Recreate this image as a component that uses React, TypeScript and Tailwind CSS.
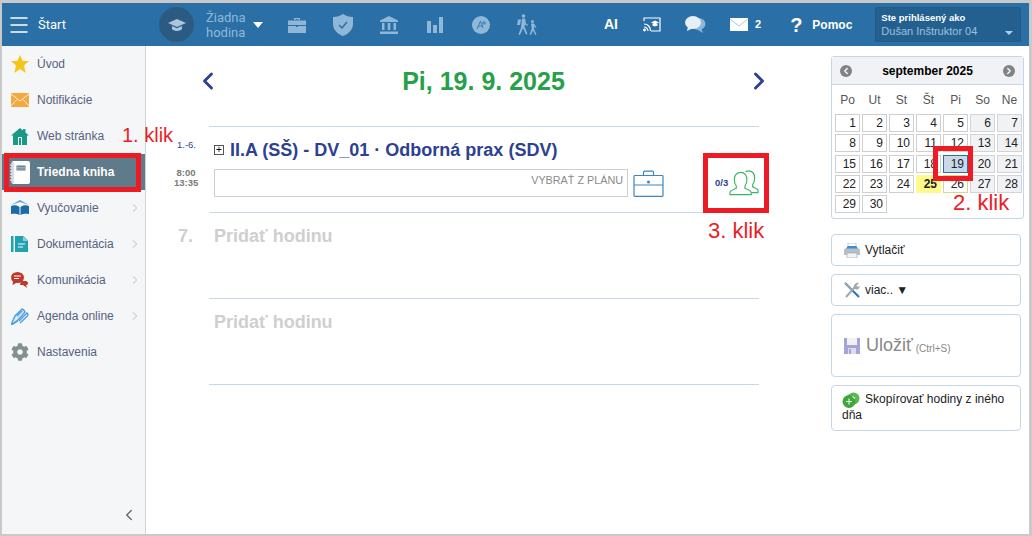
import React from "react";
import { ChevronLeft, ChevronRight, Menu } from "lucide-react";
import { FaCog } from "react-icons/fa";

// Small drawn icons
const Cap = () => (
  <svg width="18" height="14" viewBox="0 0 18 14" fill="#a9c6dd">
    <path d="M9 1 18 5 9 9 0 5z" />
    <path d="M4 8v3c2 2.500 8 2.500 10 0V8l-5 2.300z" />
  </svg>
);
const Briefcase = ({ c = "#8fb8d8" }: { c?: string }) => (
  <svg width="18" height="16" viewBox="0 0 18 16" fill={c}>
    <path d="M6 3V1h6v2h-1.300V2.200H7.300V3z" />
    <path d="M0 3.500h18V8H0zM0 9h8v1h2V9h8v7H0z" />
  </svg>
);
const Shield = () => (
  <svg width="20" height="22" viewBox="0 0 20 22">
    <path d="M10 0c3 2 6 3 10 3v7c0 6-5 10-10 12C5 20 0 16 0 10V3c4 0 7-1 10-3z" fill="#8fb8d8" />
    <path d="m6 11 3 3 5-6" stroke="#2a6fa5" strokeWidth="1.500" fill="none" />
  </svg>
);
const Bank = () => (
  <svg width="18" height="18" viewBox="0 0 18 18" fill="#8fb8d8">
    <path d="M9 0 18 4.500V6H0V4.500z" />
    <path d="M2 7h2.500v7H2zM7.700 7h2.600v7H7.700zM13.500 7H16v7h-2.500zM0 15.500h18V18H0z" />
  </svg>
);
const Bars = () => (
  <svg width="16" height="16" viewBox="0 0 16 16" fill="#8fb8d8">
    <path d="M0 4h4v12H0zM6 8h4v8H6zM12 0h4v16h-4z" />
  </svg>
);
const Plus = () => (
  <svg width="18" height="18" viewBox="0 0 18 18">
    <circle cx="9" cy="9" r="9" fill="#8fb8d8" />
    <path d="M5 13 8.500 5 11 12M6 10h5M12 5v4M10 7h4" stroke="#2a6fa5" strokeWidth="0.800" fill="none" />
  </svg>
);
const Walkers = () => (
  <svg width="20" height="21" viewBox="0 0 20 21" fill="#8fb8d8">
    <circle cx="6.500" cy="2" r="1.800" />
    <path d="M5 4.500h3l1 5 2 1.500-.6 1-2.400-1.500-.5 2 3 7.500-1.500.5-3-6.500L3 21l-1.500-.5L4 13.500z" />
    <path d="M1 5.500h3L3 11H0z" />
    <circle cx="15.500" cy="7.500" r="1.500" />
    <path d="M14 9.500h3l2.500 4-1 .5-1.500-2v3l2.500 5.500-1.300.5-2.200-4.500-2 4.500-1.300-.5 2-6z" />
  </svg>
);
const Cast = () => (
  <svg width="18" height="15" viewBox="0 0 18 15" fill="none" stroke="#fff">
    <path d="M1 4V1h16v13H8" strokeWidth="1.200" />
    <path d="M1 7c4 0 6.500 3 6.500 7M1 10c2 0 4 2 4 4" strokeWidth="1.200" />
    <circle cx="1.500" cy="13" r="1" fill="#fff" />
    <path d="m12 3.500 4 2-4 2-4-2z" fill="#fff" stroke="none" />
    <path d="M9.500 7v1.500c1 1 4 1 5 0V7" fill="#fff" stroke="none" />
  </svg>
);
const Chat = () => (
  <svg width="21" height="18" viewBox="0 0 21 18">
    <ellipse cx="13.500" cy="8" rx="7" ry="6" fill="#8fb8d8" />
    <path d="M16 12l2 5-5-3z" fill="#8fb8d8" />
    <ellipse cx="8" cy="6.500" rx="8" ry="6.500" fill="#e8f0f7" />
    <path d="M3 10 2 15l6-3z" fill="#e8f0f7" />
  </svg>
);
const Mail = () => (
  <svg width="18" height="13" viewBox="0 0 18 13">
    <path d="M0 0h18v13H0z" fill="#fff" />
    <path d="m0 1 9 7 9-7" stroke="#a9c6dd" fill="none" />
  </svg>
);

// Sidebar icons
const Star = () => (
  <svg width="18" height="18" viewBox="0 0 18 18" fill="#f5c518">
    <path d="m9 0 2.600 6H18l-5 4.400L14.700 18 9 14l-5.700 4L5 10.400 0 6h6.400z" />
  </svg>
);
const Envelope = () => (
  <svg width="18" height="14" viewBox="0 0 18 14">
    <path d="M0 0h18v14H0z" fill="#f5a83c" />
    <path d="m0 1 9 7 9-7M0 13l6-6.500M18 13l-6-6.500" stroke="#fff" strokeWidth="0.800" fill="none" />
  </svg>
);
const House = () => (
  <svg width="18" height="17" viewBox="0 0 18 17" fill="#1a9a85">
    <path d="M9 0 18 7.500h-2V17H2V7.500H0zM12 1h2.500v4L12 3z" />
    <path d="M7 9h4v8H7z" fill="#e8f5f2" />
    <path d="M8 10h2v7H8z" />
  </svg>
);
const Notebook = () => (
  <svg width="20" height="23" viewBox="0 0 20 23">
    <rect x="1.500" y="0" width="18.500" height="23" rx="2" fill="#fff" />
    <rect x="6.500" y="4.500" width="9" height="5" rx="0.500" fill="#5f7a8a" />
    <path d="M7 6.300h8M7 8h8" stroke="#fff" strokeWidth="0.500" />
    <path d="M0 4h3M0 7h3M0 10h3M0 13h3M0 16h3M0 19h3" stroke="#fff" />
    <path d="M3 1v21" stroke="#5f7a8a" strokeWidth="0.500" />
  </svg>
);
const BookOpen = () => (
  <svg width="18" height="16" viewBox="0 0 18 16">
    <path d="M9 0 18 5 9 2 0 5z" fill="#5da2d5" />
    <path d="M0 6c3-1 6-1 8.500 1v8C6 13.500 3 13.500 0 14zM18 6c-3-1-6-1-8.500 1v8c2.500-1.500 5.500-1.500 8.500-1z" fill="#1d6aa8" />
  </svg>
);
const Doc = () => (
  <svg width="17" height="16" viewBox="0 0 17 16" fill="#1fa3b0">
    <path d="M0 0h2.500v16H0zM4 0h8.500L17 4.500V16H4z" />
    <path d="M7 8h7M7 11h5" stroke="#fff" strokeWidth="1.200" />
    <path d="M12 0v5h5z" fill="#fff" opacity="0.500" />
  </svg>
);
const Bubbles = () => (
  <svg width="17" height="16" viewBox="0 0 17 16">
    <path d="M10 9h5c1 0 2 1 2 2 0 1.500-1 2-2 2l1 3-4-3h-3z" fill="#c0392b" />
    <ellipse cx="6.500" cy="5.500" rx="6.500" ry="5.500" fill="#c0392b" />
    <path d="M2 9 1.500 13 7 10z" fill="#c0392b" />
    <path d="M3 4h7M3 6.500h5" stroke="#fff" />
  </svg>
);
const Pencil = () => (
  <svg width="18" height="17" viewBox="0 0 18 17" fill="none" stroke="#4f9ddb" strokeWidth="1.400">
    <path d="M0 17 4 8l7-7c2 1 3 2 3 3L7 12z" fill="#d8e9f6" />
    <path d="M8 13 16 5c1.500 1 1 2.500 0 3.500L9 15" />
    <path d="M0 17l7-4" />
    <path d="M6 8 11 3" />
  </svg>
);

// Button icons
const Printer = () => (
  <svg width="16" height="15" viewBox="0 0 16 15">
    <path d="M4 0h8v5H4z" fill="#fff" stroke="#9aa" strokeWidth="0.600" />
    <path d="M3 4 4 3h8l1 1 1 2H2z" fill="#3b8fd0" />
    <path d="M0 7c0-1 1-1.500 2-1.500h12c1 0 2 .5 2 1.500v5H0z" fill="#b7bec6" />
    <path d="M3 10h10v5H3z" fill="#f2f4f6" stroke="#98a2ab" strokeWidth="0.600" />
  </svg>
);
const Tools = () => (
  <svg width="16" height="16" viewBox="0 0 16 16" fill="none">
    <path d="M1 1 15 15" stroke="#2670b5" strokeWidth="2" />
    <path d="M1 1 8 8" stroke="#a8aeb3" strokeWidth="1.500" />
    <path d="M2 15 11 5" stroke="#a2a8ad" strokeWidth="2" />
    <path d="M10 6c-1-3 2-6 5-5l-2.500 2.500L14 5l1.500-1c.5 3-2.500 5-5.500 2z" fill="#a2a8ad" />
  </svg>
);
const Floppy = () => (
  <svg width="16" height="16" viewBox="0 0 16 16">
    <path d="M0 0h16v16H0z" fill="#a4a5d6" />
    <path d="M3 0h10v7H3z" fill="#f2f2f6" />
    <path d="M4 10h8v6H4z" fill="#dcdcea" />
    <path d="M5 11h2v5H5z" fill="#a4a5d6" />
  </svg>
);
const CopyPlus = () => (
  <svg width="18" height="16" viewBox="0 0 18 16">
    <circle cx="11.500" cy="6.500" r="6" fill="#5bb94e" />
    <circle cx="7" cy="9.500" r="6.500" fill="#3fa63d" />
    <path d="M4 9.500h6M7 6.500v6M10.500 4.500l2.500 2" stroke="#dff3da" strokeWidth="1.200" />
  </svg>
);

const BigBriefcase = () => (
  <svg width="31" height="27" viewBox="0 0 31 27" fill="none" stroke="#3d85bd" strokeWidth="1.200" className="shrink-0">
    <path d="M1.800 5.500h27.400a.8.8 0 0 1 .8.800v19.200a.8.8 0 0 1-.8.800H1.800a.8.800 0 0 1-.8-.8V6.300a.8.800 0 0 1 .8-.8z" />
    <path d="M1 15h29M10.500 5V2.500c0-.8.500-1.300 1.300-1.300h7.400c.8 0 1.300.5 1.300 1.300V5" />
    <circle cx="15.500" cy="12" r="0.900" fill="#3d85bd" />
  </svg>
);
const People = () => (
  <svg width="30" height="26" viewBox="0 0 31 26" fill="none" stroke="#3cb56a" strokeWidth="1.200" className="shrink-0">
    <path d="M1 25h22v-2c0-2-3-3-6.500-4.500v-2.500c1.500-1.500 2-3.500 2-6.500 0-4-2-7.500-6.500-7.500S5.500 5.500 5.500 9.500c0 3 .5 5 2 6.500v2.500C4 20 1 21 1 23z" />
    <path d="M17 1.500c1-.7 2-1 3-1 4.500 0 6.500 3.500 6.500 7.500 0 3-.5 5-2 6.500V17c2.500 1.200 5.500 2 5.500 4v2h-7" />
  </svg>
);

const RedBox = ({ className }: { className: string }) => (
  <div className={`absolute border-[5px] border-[#ed1c24] ${className}`} />
);

const Klik = ({ className, children }: { className: string; children: React.ReactNode }) => (
  <div
    className={`absolute leading-none text-[#ed1c24] font-['Liberation_Sans',sans-serif] whitespace-nowrap ${className}`}
  >
    {children}
  </div>
);

const navItems = [
  { label: "Úvod", icon: <Star /> },
  { label: "Notifikácie", icon: <Envelope /> },
  { label: "Web stránka", icon: <House /> },
  { label: "Triedna kniha", icon: <Notebook />, active: true },
  { label: "Vyučovanie", icon: <BookOpen />, arrow: true },
  { label: "Dokumentácia", icon: <Doc />, arrow: true },
  { label: "Komunikácia", icon: <Bubbles />, arrow: true },
  { label: "Agenda online", icon: <Pencil />, arrow: true },
  { label: "Nastavenia", icon: <FaCog className="w-[18px] h-[18px] text-[#84908f]" /> },
];

const calendarDays = Array.from({ length: 30 }, (_, i) => i + 1);

function dayClass(d: number) {
  if (d === 19) return "bg-[#c9d9ea] border-[#2a6fa5]";
  if (d === 25) return "bg-[#fdf98a] border-[#fdf98a] font-bold";
  if (d === 26) return "bg-white border-[#d8d68a]";
  if ([6, 7, 13, 14, 20, 21, 27, 28].includes(d)) return "bg-[#f1f2f5] border-[#d4d4d4]";
  return "bg-white border-[#cfcfcf]";
}

const SideButton = ({ children, className = "" }: { children: React.ReactNode; className?: string }) => (
  <div className={`bg-white border border-[#c5d6e6] rounded-[4px] px-[12px] ${className}`}>{children}</div>
);

const EmptyLesson = ({ num }: { num?: string }) => (
  <div className="h-[86px] border-t border-[#c5d8ea] pt-[13px] pl-[5px]">
    <div className="relative text-[18px] leading-[20px] font-bold text-[#cfcfcf]">
      {num && <span className="absolute left-[-36px] top-0">{num}</span>}
      Pridať hodinu
    </div>
  </div>
);

export default function App() {
  return (
    <div className="relative w-[1032px] h-[536px] overflow-hidden bg-[#c9c9c9] pt-[3px] pl-[2px] pr-[3px] pb-[2px] font-['Liberation_Sans',Arial,sans-serif]">
      <div className="h-full flex flex-col bg-white">
        {/* Top bar */}
        <header className="h-[43px] shrink-0 bg-[#2a6fa5] flex items-center text-white">
          <Menu className="ml-[5px] w-[24px] h-[24px]" strokeWidth={1.5} />
          <span className="ml-[7px] w-[121px] text-[13px] font-['Roboto',sans-serif]">Štart</span>
          <div className="w-[35px] h-[35px] rounded-full bg-[#2b5b82] flex items-center justify-center">
            <Cap />
          </div>
          <div className="ml-[12px] w-[38px] text-[13px] leading-[15px] text-[#8fb8d8] font-['Roboto',sans-serif]">
            Žiadna hodina
          </div>
          <div className="ml-[9px] w-0 h-0 border-x-[5px] border-x-transparent border-t-[6px] border-t-white" />
          <div className="ml-[11px] flex items-center">
            <div className="w-[46px] flex justify-center"><Briefcase /></div>
            <div className="w-[46px] flex justify-center"><Shield /></div>
            <div className="w-[46px] flex justify-center"><Bank /></div>
            <div className="w-[46px] flex justify-center"><Bars /></div>
            <div className="w-[46px] flex justify-center"><Plus /></div>
            <div className="w-[46px] flex justify-center"><Walkers /></div>
          </div>
          <span className="ml-[54px] w-[17px] text-[14px] font-bold">AI</span>
          <div className="ml-[22px]"><Cast /></div>
          <div className="ml-[24px]"><Chat /></div>
          <div className="ml-[24px]"><Mail /></div>
          <span className="ml-[7px] text-[11px] font-bold">2</span>
          <span className="ml-[29px] text-[20px] font-bold leading-none">?</span>
          <span className="ml-[10px] text-[12px] font-bold">Pomoc</span>
          <div className="ml-[23px] w-[146px] h-[35px] bg-[#24608f] border border-[#235a87] rounded-[2px] pl-[5px] pt-[3px] relative">
            <div className="text-[9.500px] leading-[13px] font-bold">Ste prihlásený ako</div>
            <div className="text-[11px] leading-[15px] text-[#9cc0de]">Dušan Inštruktor 04</div>
            <div className="absolute right-[7px] bottom-[6px] w-0 h-0 border-x-[4px] border-x-transparent border-t-[4px] border-t-[#b5cfe3]" />
          </div>
        </header>

        <div className="flex flex-1 min-h-0">
          {/* Left menu */}
          <aside className="w-[144px] shrink-0 bg-[#f5f6f8] border-r border-[#cfd4d8] flex flex-col">
            <nav>
              {navItems.map((item) => (
                <div
                  key={item.label}
                  className={`h-[36px] flex items-center text-[12px] ${
                    item.active ? "bg-[#5f7a8a] text-white font-bold" : "text-[#56627e]"
                  }`}
                >
                  <div className="w-[35px] flex justify-center items-center shrink-0">{item.icon}</div>
                  <span className="flex-1">{item.label}</span>
                  {item.arrow && <ChevronRight className="w-[14px] h-[14px] mr-[3px] text-[#d2d6da]" />}
                </div>
              ))}
            </nav>
            <div className="mt-auto mb-[10px] flex justify-end pr-[7px]">
              <ChevronLeft className="w-[18px] h-[18px] text-[#5f707c]" />
            </div>
          </aside>

          {/* Day view */}
          <main className="w-[679px] shrink-0 pl-[63px]">
            <div className="h-[80px] flex items-start justify-between pt-[21px] w-[579px] -ml-[15px]">
              <ChevronLeft className="w-[28px] h-[28px] text-[#2d4191]" strokeWidth={2.5} />
              <h1 className="text-[25px] leading-[28px] font-bold text-[#27a04a]">Pi, 19. 9. 2025</h1>
              <ChevronRight className="w-[28px] h-[28px] text-[#2d4191]" strokeWidth={2.5} />
            </div>

            <div className="w-[550px]">
              <div className="h-[86px] border-t border-[#c5d8ea] relative pl-[5px] pt-[13px]">
                <div className="absolute -left-[32px] top-[12px] text-[9.500px] leading-[11px] text-[#2d4191]">1.-6.</div>
                <div className="absolute -left-[35px] top-[41px] w-[24px] text-center text-[9.500px] leading-[10px] font-bold text-[#7a7a7a]">
                  8:00
                  <br />
                  13:35
                </div>
                <div className="flex items-center h-[20px]">
                  <div className="w-[10px] h-[10px] border border-[#555] flex items-center justify-center text-[10px] leading-none mr-[6px] text-black">
                    +
                  </div>
                  <h2 className="text-[18px] leading-[20px] font-bold text-[#2d4191] whitespace-nowrap">
                    II.A (SŠ) - DV_01 · Odborná prax (SDV)
                  </h2>
                </div>
                <div className="flex items-center mt-[9px]">
                  <div className="w-[414px] shrink-0 h-[28px] border border-[#cfcfcf] text-right pr-[4px] pt-[3px] text-[10.800px] leading-[14px] text-[#8a8a8a]">
                    VYBRAŤ Z PLÁNU
                  </div>
                  <div className="ml-[5px]"><BigBriefcase /></div>
                  <span className="ml-[51px] shrink-0 text-[9.500px] font-bold text-[#2d4191] w-[14px]">0/3</span>
                  <People />
                </div>
              </div>
              <EmptyLesson num="7." />
              <EmptyLesson />
              <div className="border-t border-[#c5d8ea]" />
            </div>
          </main>

          {/* Right panel */}
          <aside className="flex-1 pl-[6px] pt-[10px]">
            <div className="w-[193px] h-[163px] border border-[#c5d6e6] rounded-[3px]">
              <div className="h-[28px] bg-[#f0f2f5] border-b border-[#c5d6e6] flex items-center justify-between px-[8px]">
                <span className="w-[12px] h-[12px] rounded-full bg-[#7f8488] flex items-center justify-center">
                  <ChevronLeft className="w-[10px] h-[10px] text-white" strokeWidth={3} />
                </span>
                <span className="text-[12px] font-bold text-black">september 2025</span>
                <span className="w-[12px] h-[12px] rounded-full bg-[#7f8488] flex items-center justify-center">
                  <ChevronRight className="w-[10px] h-[10px] text-white" strokeWidth={3} />
                </span>
              </div>
              <div className="px-[3px]">
                <div className="grid grid-cols-[repeat(7,25px)] gap-x-[2px] h-[29px] items-center text-center text-[12px] text-[#555]">
                  {["Po", "Ut", "St", "Št", "Pi", "So", "Ne"].map((d) => (
                    <span key={d}>{d}</span>
                  ))}
                </div>
                <div className="grid grid-cols-[repeat(7,25px)] gap-x-[2px] gap-y-[2.250px]">
                  {calendarDays.map((d) => (
                    <div
                      key={d}
                      className={`h-[18px] border text-right pr-[3px] text-[12px] leading-[17px] text-[#222] ${dayClass(d)}`}
                    >
                      {d}
                    </div>
                  ))}
                </div>
              </div>
            </div>

            <div className="w-[190px] mt-[15px] flex flex-col gap-[8px] text-[12px] text-[#222]">
              <SideButton className="h-[32px] flex items-center gap-[5px]">
                <Printer /> Vytlačiť
              </SideButton>
              <SideButton className="h-[32px] flex items-center gap-[5px]">
                <Tools /> viac.. ▼
              </SideButton>
              <SideButton className="h-[63px] flex items-center gap-[6px]">
                <Floppy />
                <span className="text-[18px] text-[#888]">Uložiť</span>
                <span className="text-[10px] text-[#888] mt-[5px] -ml-[3px]">(Ctrl+S)</span>
              </SideButton>
              <SideButton className="h-[46px] !px-[10px] pt-[6px] leading-[15px]">
                <span className="inline-block align-middle mr-[5px]"><CopyPlus /></span>
                Skopírovať hodiny z iného dňa
              </SideButton>
            </div>
          </aside>
        </div>
      </div>

      {/* Annotations over the page */}
      <RedBox className="left-[4px] top-[153px] w-[137px] h-[39px]" />
      <RedBox className="left-[933px] top-[146px] w-[40px] h-[35px]" />
      <RedBox className="left-[703px] top-[153px] w-[66px] h-[60px]" />
      <Klik className="left-[122px] top-[125px] text-[20px]">1. klik</Klik>
      <Klik className="left-[953px] top-[192px] text-[22px]">2. klik</Klik>
      <Klik className="left-[708px] top-[220px] text-[22px]">3. klik</Klik>
    </div>
  );
}
